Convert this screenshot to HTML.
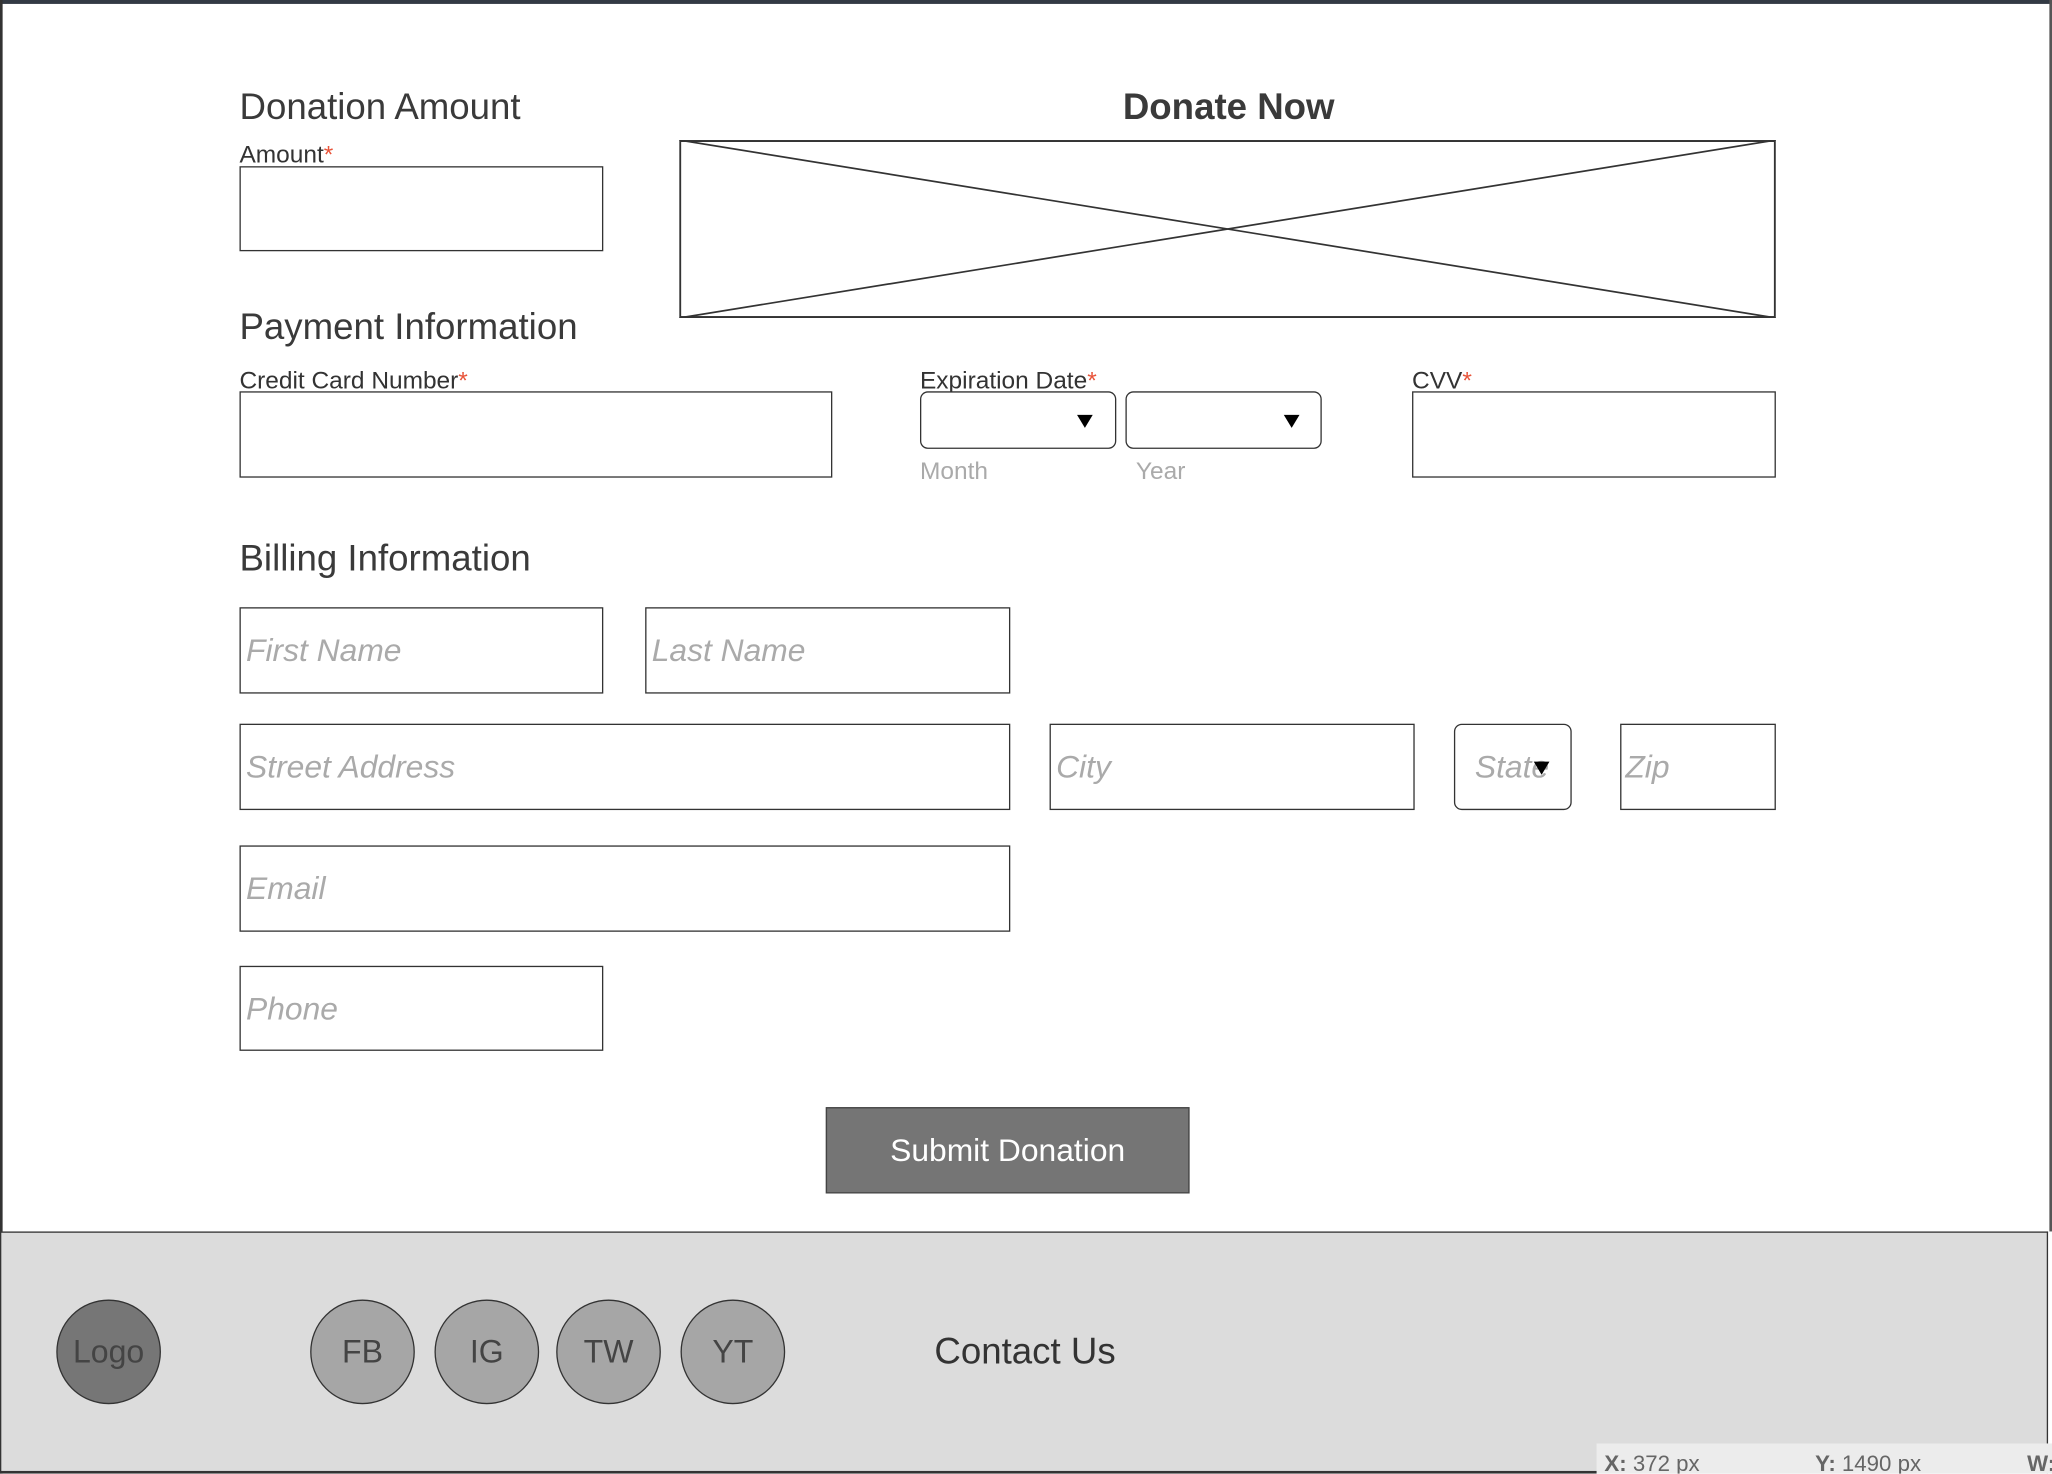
<!DOCTYPE html>
<html><head><style>
html,body{margin:0;padding:0;width:2052px;height:1474px;overflow:hidden;background:#fff}
#s{position:absolute;left:0;top:0;width:1568px;height:1126px;transform:scale(1.30867);transform-origin:0 0;font-family:"Liberation Sans",sans-serif;color:#333}
.a{position:absolute}
.box{position:absolute;border:1.5px solid #333;box-sizing:border-box;background:#fff}
.rbox{position:absolute;border:1.5px solid #333;box-sizing:border-box;border-radius:6px;background:#fff}
.h{position:absolute;font-size:28px;color:#3a3a3a}
.l{position:absolute;font-size:18.7px;color:#333}
.l b{color:#e8543a;font-weight:normal}
.ph{position:absolute;font-size:24.3px;font-style:italic;color:#aaa}
.sub{position:absolute;font-size:18.7px;color:#aaa}
.tri{position:absolute;width:0;height:0;border-left:6px solid transparent;border-right:6px solid transparent;border-top:10px solid #000}
.c{position:absolute;width:80px;height:80px;border-radius:50%;border:1.5px solid #333;box-sizing:border-box;background:#a6a6a6;font-size:24.5px;color:#444;display:flex;align-items:center;justify-content:center;padding-top:2px}
</style></head><body><div id="s">
<div class="a" style="left:0;top:0;width:1568px;height:3px;background:#333a44"></div>
<div class="a" style="left:0;top:0;width:1.5px;height:1126px;background:#333"></div>
<div class="a" style="left:1566px;top:0;width:2px;height:941px;background:#555"></div>

<div class="h" style="left:183px;top:66px">Donation Amount</div>
<div class="l" style="left:183px;top:107px">Amount<b>*</b></div>
<div class="box" style="left:183px;top:127px;width:278px;height:65px"></div>

<div class="a" style="left:858px;top:66px;font-size:28px;font-weight:bold;color:#3a3a3a">Donate Now</div>
<svg class="a" style="left:519px;top:107px" width="838" height="136"><rect x="0.75" y="0.75" width="836.5" height="134.5" fill="none" stroke="#333" stroke-width="1.5"/><line x1="0" y1="0" x2="838" y2="136" stroke="#333" stroke-width="1.3"/><line x1="838" y1="0" x2="0" y2="136" stroke="#333" stroke-width="1.3"/></svg>

<div class="h" style="left:183px;top:234px">Payment Information</div>
<div class="l" style="left:183px;top:280px">Credit Card Number<b>*</b></div>
<div class="box" style="left:183px;top:299px;width:453px;height:66px"></div>
<div class="l" style="left:703px;top:280px">Expiration Date<b>*</b></div>
<div class="rbox" style="left:703px;top:299px;width:150px;height:44px"></div>
<div class="tri" style="left:823px;top:317px"></div>
<div class="rbox" style="left:860px;top:299px;width:150px;height:44px"></div>
<div class="tri" style="left:981px;top:317px"></div>
<div class="sub" style="left:703px;top:349px">Month</div>
<div class="sub" style="left:868px;top:349px">Year</div>
<div class="l" style="left:1079px;top:280px">CVV<b>*</b></div>
<div class="box" style="left:1079px;top:299px;width:278px;height:66px"></div>

<div class="h" style="left:183px;top:411px">Billing Information</div>
<div class="box" style="left:183px;top:464px;width:278px;height:66px"></div><div class="ph" style="left:188px;top:484px">First Name</div>
<div class="box" style="left:493px;top:464px;width:279px;height:66px"></div><div class="ph" style="left:498px;top:484px">Last Name</div>
<div class="box" style="left:183px;top:553px;width:589px;height:66px"></div><div class="ph" style="left:188px;top:573px">Street Address</div>
<div class="box" style="left:802px;top:553px;width:279px;height:66px"></div><div class="ph" style="left:807px;top:573px">City</div>
<div class="rbox" style="left:1111px;top:553px;width:90px;height:66px"></div><div class="ph" style="left:1127px;top:573px">State</div><div class="tri" style="left:1172px;top:582px"></div>
<div class="box" style="left:1238px;top:553px;width:119px;height:66px"></div><div class="ph" style="left:1242px;top:573px">Zip</div>
<div class="box" style="left:183px;top:646px;width:589px;height:66px"></div><div class="ph" style="left:188px;top:666px">Email</div>
<div class="box" style="left:183px;top:738px;width:278px;height:65px"></div><div class="ph" style="left:188px;top:758px">Phone</div>

<div class="a" style="left:631px;top:846px;width:278px;height:66px;background:#757575;border:1.5px solid #444;box-sizing:border-box;color:#fff;font-size:24.3px;display:flex;align-items:center;justify-content:center;padding-top:2px">Submit Donation</div>

<div class="a" style="left:0;top:941px;width:1565px;height:185px;background:#dcdcdc;border-top:1.5px solid #333;border-right:1.5px solid #333;border-left:1.5px solid #333;box-sizing:border-box"></div>
<div class="c" style="left:43px;top:993px;background:#767676">Logo</div>
<div class="c" style="left:237px;top:993px">FB</div>
<div class="c" style="left:332px;top:993px">IG</div>
<div class="c" style="left:425px;top:993px">TW</div>
<div class="c" style="left:520px;top:993px">YT</div>
<div class="a" style="left:714px;top:1017px;font-size:28px;color:#333">Contact Us</div>
<div class="a" style="left:1220px;top:1103px;width:348px;height:23px;background:#ececec;overflow:hidden;font-size:17px;color:#666;white-space:nowrap"><span style="position:absolute;left:6px;top:6px"><b>X:</b> 372 px</span><span style="position:absolute;left:167px;top:6px"><b>Y:</b> 1490 px</span><span style="position:absolute;left:329px;top:6px"><b>W:</b></span></div>
<div class="a" style="left:0;top:1124px;width:1220px;height:2px;background:#333"></div>
</div></body></html>
